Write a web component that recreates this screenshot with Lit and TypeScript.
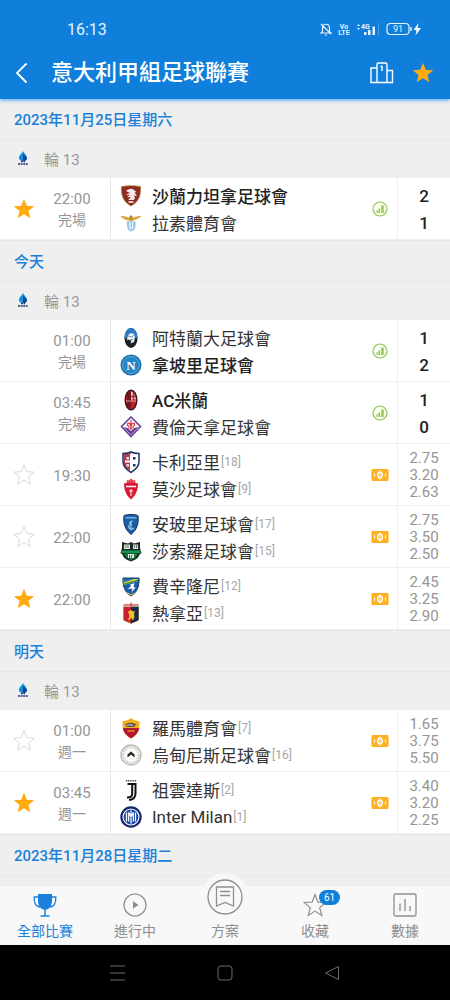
import { LitElement, html, svg, css, nothing } from "lit";
import { customElement, property, state } from "lit/decorators.js";
import { classMap } from "lit/directives/class-map.js";

interface Team { name: string; crest: string; rank?: number; goals?: number }
interface Match {
  id: string; time: string; note?: string; starred?: boolean; star: boolean;
  home: Team; away: Team; odds?: string[];
}
interface Day { label: string; matches: Match[] }

const STAR = "M12 1.8l2.8 6.9 7.4.5-5.7 4.8 1.8 7.3L12 17.3l-6.3 4 1.8-7.3L1.8 9.2l7.4-.5z";

const crests: Record<string, unknown> = {
  salernitana: svg`<path d="M1.5 1.5C7 .5 15 .5 20.500 1.500c.5 8-1 15-9.500 19.500C2.500 16.500 1 9.500 1.500 1.500z" fill="#8d2a22" stroke="#b0893c" stroke-width=".8"/>
    <path d="M6 6c3-2.500 6-3 8-1l2.500 2-2 .5 2.500 3.500-3-.5c1.500 2 1 3.500-.5 4.500H8l3-2.500-4-.5 3-2-4.500-.5L10 8z" fill="#f4e9e6"/><path d="M8.500 17h5" stroke="#fff" stroke-width="1.500"/>`,
  lazio: svg`<path d="M.5 4.500C4 3 8 6.500 11 5.500c3 1 7-2.500 10.500-1C19 6 17 7.500 13 8.500L11 10 8.500 8.500C5 8 3 6.500.5 4.500z" fill="#d9a93f"/>
    <path d="M9.500 4.500L11 3l1.500 1.500v3h-3z" fill="#b78a2b"/><path d="M7 9.500h8.500V14c0 3-2 4.500-4.250 5.500C9 18.500 7 17 7 14z" fill="#8fc3ee"/>
    <path d="M9.300 10.500h3.900v5.500l-2 1.500-1.900-1.500z" fill="#fff"/><path d="M11.200 10.500v6" stroke="#6aaae0"/>`,
  atalanta: svg`<ellipse cx="11" cy="11" rx="6.500" ry="10" fill="#1c1f24"/><path d="M11 1c4 0 6.500 4.500 6.500 10H4.500C4.500 5.500 7 1 11 1z" fill="#2a7cc4"/>
    <path d="M8 9c1-3 3-3.500 6-2l1 3.500-1 4.500-3.500 1.500 1-3-3.500-1-1.500 1z" fill="#eef3f8"/><path d="M8 9l4 1 2-2M10 13l3-1" stroke="#8395a8" fill="none"/>`,
  napoli: svg`<circle cx="11" cy="11" r="10.500" fill="#1b6ea8"/><circle cx="11" cy="11" r="8.500" fill="#2586c6" stroke="#5aa9dc"/>
    <text x="11" y="15.500" class="serif" font-size="13" text-anchor="middle" fill="#fff">N</text>`,
  milan: svg`<ellipse cx="11" cy="11" rx="6.500" ry="10.500" fill="#3a1518"/><ellipse cx="11" cy="11" rx="5.200" ry="9" fill="#c0202b"/>
    <path d="M8 4v14M10 3v16" stroke="#1b0c0e" stroke-width=".9"/><path d="M11 2.500c2.500.5 4.700 4 4.700 8H11z" fill="#e9d9d9"/><path d="M13.500 3.500v15M11 7.500h5" stroke="#c0202b" stroke-width="1.500"/><path d="M6 12h10" stroke="#f0dede" stroke-width=".7"/>`,
  fiorentina: svg`<path d="M11 1l9.500 9.500L11 20.500 1.500 10.500z" fill="#fff" stroke="#69409a" stroke-width="1.600"/><path d="M3.500 11l4 1 3.500 3 3.500-3 4-1L11 19z" fill="#69409a"/>
    <path d="M11 4v10M11 10c-1-4-4-3.500-3.500-1 .5 1.500 2 1 2 1M11 10c1-4 4-3.500 3.500-1-.5 1.500-2 1-2 1M8 12h6" stroke="#e0303c" stroke-width="1.200" fill="none"/>`,
  cagliari: svg`<path d="M3 2.500c3 0 6-.5 8-1.500 2 1 5 1.500 8 1.500v8c0 5-4 8.500-8 11-4-2.500-8-6-8-11z" fill="#fff" stroke="#1c3566" stroke-width="1.500"/>
    <path d="M3.500 3c3 0 5.500-.5 7.500-1.500v19C7 18 3.500 15 3.500 10.500z" fill="#a31b3b" opacity=".85"/><path d="M11 3v17" stroke="#fff" stroke-width="2"/><path d="M5 10.500h12" stroke="#fff" stroke-width="2"/>
    <path d="M6.500 6h2.500v2.500H6.500zM6.500 13h2.500v2.500H6.500z" fill="#f6dce2"/><path d="M13 6h2.500v2.500H13zM13 13h2.500v2.500H13z" fill="#1c3566"/>`,
  monza: svg`<path d="M7 1.500l1.500 1L11 .5l2.500 2 1.500-1 .5 3.500h-9z" fill="#e64a5a"/><path d="M4 5.500c5-1.500 9-1.500 14 0C18 13 15 18 11 21.500 7 18 4 13 4 5.500z" fill="#db1534"/>
    <path d="M6 8.500h10" stroke="#fff" stroke-width="1.500"/><path d="M11 11v7M9 13h4" stroke="#fff" stroke-width="1"/>`,
  empoli: svg`<path d="M4 2.500c4-1.500 10-1.500 14 0 1 8-1 14-7 19C5 16.500 3 10.500 4 2.500z" fill="#1b5fa6" stroke="#12365f"/>
    <path d="M5.500 4h11v1.500h-11z" fill="#7fb0dd"/><path d="M13 8c-4 0-4 3-2 3.500-3 0-3 4 0 4.500 2 .3 3-1 3-1M11 8v9" stroke="#9cc8ee" stroke-width="1.200" fill="none"/>`,
  sassuolo: svg`<path d="M2 2l6 1.500L11 2l3 1.500L20 2v6l1.500 5-2 1.500c-1 4-4 5-8.500 7-4.500-2-7.500-3-8.500-7l-2-1.500L2 8z" fill="#1b2b22"/>
    <path d="M4 4.500h6V9H4zM13 4.500h5V9h-5z" fill="#dfe6e2"/><path d="M6 5v3M8 5v3M14.500 5v3M16.500 5v3" stroke="#46564c" stroke-width=".8"/><path d="M1.500 10.500h19v2.500h-19z" fill="#14984f"/><path d="M4.500 13.500h13c-1 4-3.500 5-6.500 6.500-3-1.500-5.500-2.500-6.500-6.500z" fill="#12803f"/><path d="M8 14h6v4H8z" fill="#dfece4"/><path d="M9.500 15v3M12 15l-1 3" stroke="#12803f"/>`,
  frosinone: svg`<path d="M3 3h16c.5 8-1.500 14-8 18C4.500 17 2.500 11 3 3z" fill="#1c5da8" stroke="#17406f"/><path d="M3.500 4H18v2L3.800 10z" fill="#f0d331"/>
    <path d="M3.500 4H14L3.700 7.500z" fill="#2a6db0"/><path d="M3.800 8.500L18 4.500V6L4.500 10z" fill="#3c9a52"/><path d="M14.500 8l-5 2 2 1-4 3 5-.5-1 4 4-5-2-.5z" fill="#fff"/><path d="M7 17.500l4 2.500 3-2" stroke="#f0d331" fill="none"/>`,
  genoa: svg`<path d="M3.500 4.500h15V18c-3 2-5.500 2-7.500 3.500C9 20 6.500 20 3.500 18z" fill="#c8202f" stroke="#b08d42"/><path d="M11 4.500h7.500V18c-3 2-5.500 2-7.500 3.500z" fill="#182a4a"/>
    <path d="M3.500 1.500h15v3h-15z" fill="#f3e9e2"/><path d="M11 .5v4M3.500 3h15" stroke="#c8202f"/><path d="M8 9.500l3-1.500 2 1.500 2-.5-1 3 .5 3-1.500 3h-1l-.5-2.500-2 2.500H8l1.500-4z" fill="#f2c22f"/>`,
  roma: svg`<path d="M2.500 4.500C6 3.500 9 3 11 1c2 2 5 2.500 8.500 3.500C20 13 17 18 11 21.500 5 18 2 13 2.500 4.500z" fill="#f2b01e"/><path d="M2.700 11h16.600C18.500 15.500 15.500 19 11 21.500 6.500 19 3.500 15.500 2.700 11z" fill="#b3162d"/>
    <path d="M5.500 7.500c2-2 6-2 9-1l2 1.500-2 .5v1.500H7z" fill="#57514a"/><path d="M7 8.500c2-1 4-.8 6 0" stroke="#e8e3da" fill="none"/><path d="M7.500 14h7" stroke="#f2b01e" stroke-width="1.200"/>`,
  udinese: svg`<circle cx="11" cy="11" r="10" fill="#fbfbfa" stroke="#bdbab4" stroke-width="1.400"/><circle cx="11" cy="11" r="7.800" fill="none" stroke="#c9c5bf" stroke-width="1.800" stroke-dasharray="1.500 1"/>
    <path d="M7.500 13.500V10.500L11 7.500l3.500 3v3L11 10.500z" fill="#222"/>`,
  juventus: svg`<path d="M6 1.800h10.500" stroke="#555" stroke-width="1.500" stroke-dasharray="1.200 .6"/><path d="M7.500 5h4.700v10c0 2.500-2 3.500-5.200 3.500" fill="none" stroke="#111" stroke-width="2"/>
    <path d="M12.500 5h3v9.500c0 4-2.500 6-6.500 6.500" fill="none" stroke="#111" stroke-width="2"/>`,
  inter: svg`<circle cx="11" cy="11" r="10.700" fill="#14266b"/><circle cx="11" cy="11" r="8" fill="#1f4fb0" stroke="#fff" stroke-width="1.100"/>
    <path d="M6.500 6.500v9M15.500 6.500v9M11 4.500v13M8.700 15.500v-9L11 11l2.300-4.500v9" stroke="#fff" stroke-width="1.200" fill="none"/>`,
};

const DAYS: Day[] = [
  { label: "2023年11月25日星期六", matches: [
    { id: "m1", time: "22:00", note: "完場", star: true, starred: true,
      home: { name: "沙蘭力坦拿足球會", crest: "salernitana", goals: 2 }, away: { name: "拉素體育會", crest: "lazio", goals: 1 } },
  ] },
  { label: "今天", matches: [
    { id: "m2", time: "01:00", note: "完場", star: false,
      home: { name: "阿特蘭大足球會", crest: "atalanta", goals: 1 }, away: { name: "拿坡里足球會", crest: "napoli", goals: 2 } },
    { id: "m3", time: "03:45", note: "完場", star: false,
      home: { name: "AC米蘭", crest: "milan", goals: 1 }, away: { name: "費倫天拿足球會", crest: "fiorentina", goals: 0 } },
    { id: "m4", time: "19:30", star: true, odds: ["2.75", "3.20", "2.63"],
      home: { name: "卡利亞里", crest: "cagliari", rank: 18 }, away: { name: "莫沙足球會", crest: "monza", rank: 9 } },
    { id: "m5", time: "22:00", star: true, odds: ["2.75", "3.50", "2.50"],
      home: { name: "安玻里足球會", crest: "empoli", rank: 17 }, away: { name: "莎索羅足球會", crest: "sassuolo", rank: 15 } },
    { id: "m6", time: "22:00", star: true, starred: true, odds: ["2.45", "3.25", "2.90"],
      home: { name: "費辛隆尼", crest: "frosinone", rank: 12 }, away: { name: "熱拿亞", crest: "genoa", rank: 13 } },
  ] },
  { label: "明天", matches: [
    { id: "m7", time: "01:00", note: "週一", star: true, odds: ["1.65", "3.75", "5.50"],
      home: { name: "羅馬體育會", crest: "roma", rank: 7 }, away: { name: "烏甸尼斯足球會", crest: "udinese", rank: 16 } },
    { id: "m8", time: "03:45", note: "週一", star: true, starred: true, odds: ["3.40", "3.20", "2.25"],
      home: { name: "祖雲達斯", crest: "juventus", rank: 2 }, away: { name: "Inter Milan", crest: "inter", rank: 1 } },
  ] },
  { label: "2023年11月28日星期二", matches: [] },
];

const reset = css`
  * { box-sizing: border-box; }
  button { font: inherit; color: inherit; background: none; border: 0; padding: 0; margin: 0; cursor: pointer; }
  svg { display: block; flex: none; }
`;

@customElement("match-row")
class MatchRow extends LitElement {
  @property({ attribute: false }) match!: Match;
  @state() private toggled = false;

  static styles = [reset, css`
    :host {
      display: grid; grid-template-columns: 48px 62px minmax(0, 1fr) 34px 53px;
      min-height: 62px; background: #fff; border-bottom: 1px solid #efefef;
    }
    .star, .extra { display: grid; place-items: center; padding-top: 1px; }
    .outline { fill: none; stroke: #d9d9d9; }
    .solid { fill: #ffab0f; stroke: none; }
    .when {
      display: flex; flex-direction: column; justify-content: center; align-items: center;
      padding: 3px 14px 0 0; font-size: 15px; line-height: 21px; color: #959595;
    }
    .note { font-size: 14px; }
    .teams { border-left: 1px solid #e9e9e9; padding: 4px 0 3px 9px; }
    .team { display: flex; align-items: center; height: 27px; }
    .name { margin-left: 10px; font-size: 17px; color: #333; white-space: nowrap; }
    .winner { font-weight: 500; color: #222; }
    .rank { margin-left: 1px; font-size: 12px; color: #a6a6a6; }
    .result { border-left: 1px solid #f1f1f1; text-align: center; display: flex; flex-direction: column; justify-content: center; padding-top: 2px; }
    .goal { font-size: 17px; line-height: 27px; font-weight: 500; color: #222; }
    .odd { font-size: 15px; line-height: 17px; color: #959595; }
    .serif { font-family: "Liberation Serif", serif; font-weight: 700; }
  `];

  private team(t: Team, other: Team) {
    const won = (t.goals ?? 0) > (other.goals ?? 0);
    return html`<div class="team">
      <svg width="22" height="22" viewBox="0 0 22 22" aria-hidden="true">${crests[t.crest]}</svg>
      <span class=${classMap({ name: true, winner: won })}>${t.name}</span>
      ${t.rank ? html`<span class="rank">[${t.rank}]</span>` : nothing}
    </div>`;
  }

  render() {
    const m = this.match;
    const on = !!m.starred !== this.toggled;
    return html`
      ${m.star ? html`<button class="star" aria-label="收藏" aria-pressed=${on} @click=${() => (this.toggled = !this.toggled)}>
        <svg width="24" height="24" viewBox="0 0 24 24"><path class=${on ? "solid" : "outline"} d=${STAR} /></svg>
      </button>` : html`<span></span>`}
      <div class="when"><time>${m.time}</time>${m.note ? html`<span class="note">${m.note}</span>` : nothing}</div>
      <div class="teams">${this.team(m.home, m.away)}${this.team(m.away, m.home)}</div>
      <div class="extra">${m.odds
        ? html`<svg width="18" height="12" viewBox="0 0 18 12" aria-hidden="true">
            <rect x=".5" width="17" height="12" rx="1" fill="#fcb022"/><ellipse cx="9" cy="6" rx="2.300" ry="3" fill="none" stroke="#fff" stroke-width="1.300"/>
            <path d="M9 1.500v9" stroke="#fff" stroke-width=".9"/><path d="M3.500 4v4M14.500 4v4" stroke="#fff" stroke-width=".9"/></svg>`
        : html`<svg width="16" height="16" viewBox="0 0 16 16" aria-hidden="true">
            <circle cx="8" cy="8" r="7" fill="#fbfff4" stroke="#8fc748" stroke-width="1.200"/>
            <path d="M5.200 9v3" stroke="#8fc748" stroke-width="1.200"/><path d="M7.300 7.500V12" stroke="#8fc748" stroke-width="1.600"/><path d="M10.500 4.500V12" stroke="#8fc748" stroke-width="2.400"/></svg>`}</div>
      <div class="result">${m.odds
        ? m.odds.map((o) => html`<span class="odd">${o}</span>`)
        : [m.home, m.away].map((t) => html`<span class="goal">${t.goals}</span>`)}</div>
    `;
  }
}

@customElement("app-root")
class AppRoot extends LitElement {
  @state() private tab = 0;

  static styles = [reset, css`
    :host {
      display: flex; flex-direction: column; height: 100vh; overflow: hidden; background: #efefef;
      font-family: Roboto, "Noto Sans CJK TC", sans-serif;
    }
    header { flex: none; background: #107fdc; color: #fff; z-index: 1; box-shadow: 0 1px 4px #3d9cf0; }
    .status { display: flex; align-items: center; padding: 16px 28px 5px 67px; height: 47px; font-size: 16px; color: #e4f3ff; }
    .signals { display: flex; align-items: center; gap: 6px; margin-left: auto; }
    .tiny { font-size: 7px; font-weight: 700; fill: #e4f3ff; }
    .pct { font-size: 9px; fill: #e4f3ff; }
    .bar { display: flex; align-items: center; height: 52px; padding: 0 15px 0 14px; }
    h1 { flex: 1; margin: 0 0 0 21px; font-size: 22px; font-weight: 500; line-height: 32px; white-space: nowrap; }
    .table { margin-right: 16px; }
    main { flex: 1; min-height: 0; overflow: hidden; }
    h2 {
      margin: 0; height: 41px; padding: 0 14px; border-bottom: 1px solid #e6e6e6;
      font-size: 15px; font-weight: 500; line-height: 42px; color: #1a80d9;
    }
    .round { display: flex; align-items: center; height: 38px; padding: 0 0 2px 16px; gap: 14px; font-size: 15px; color: #999; }
    .list { border-bottom: 1px solid #e8e8e8; }
    nav { flex: none; display: grid; grid-template-columns: repeat(5, 1fr); height: 59px; background: #f8f8f8; z-index: 1; }
    .tab { display: flex; flex-direction: column; align-items: center; padding-top: 7px; font-size: 14px; line-height: 24px; color: #8e8e8e; }
    .active { color: #1a80d9; }
    .icon { position: relative; margin-bottom: 2px; }
    .bubble { margin: -20px 0 -2px; padding: 6px; border-radius: 50%; background: #f8f8f8; }
    .badge {
      position: absolute; left: 16px; top: -3px; height: 15px; padding: 0 5px; border-radius: 8px;
      background: #107fdc; color: #fff; font-size: 10px; line-height: 15px;
    }
    .system { flex: none; display: flex; justify-content: center; align-items: center; gap: 91px; height: 55px; padding-right: 2px; background: #000; }
  `];

  private tabs = [
    { label: "全部比賽", icon: svg`<path d="M5 1h14v7c0 5-3 8-5.500 8.500h-3C8 16 5 13 5 8z" fill="currentColor"/>
        <path d="M5 4H1.200c-.3 6 1.300 9.500 5.800 10M19 4h3.800c.3 6-1.300 9.500-5.800 10" fill="none" stroke="currentColor" stroke-width="1.300"/><path d="M12 16v7M7.500 23h9" fill="none" stroke="currentColor" stroke-width="1.500"/>` },
    { label: "進行中", icon: svg`<circle cx="12" cy="12" r="11" fill="none" stroke="currentColor" stroke-width="1.200"/><path d="M10 8.300l5.500 3.700-5.500 3.700z" fill="currentColor"/>` },
    { label: "方案", icon: nothing },
    { label: "收藏", badge: "61", icon: svg`<path d="M12 1.500l2.900 7.600 8 .4-6.200 5.100 2.100 7.900L12 18.100l-6.800 4.400 2.100-7.900L1.100 9.500l8-.4z" fill="none" stroke="currentColor" stroke-width="1.200"/>` },
    { label: "數據", icon: svg`<rect x="1" y="1" width="22" height="22" rx="1.500" fill="none" stroke="currentColor" stroke-width="1.300"/><path d="M7 10.500V18M12 6v12M17 13v5" stroke="currentColor" stroke-width="1.300"/>` },
  ];

  render() {
    return html`
      <header>
        <div class="status">
          <span>16:13</span>
          <div class="signals" aria-hidden="true">
            <svg width="12" height="14" viewBox="0 0 12 14" fill="none" stroke="#e4f3ff" stroke-width="1.200"><path d="M2.500 10V6c0-5 7-5 7 0v4l1.500 1H1zM5 13h2M1 2l10 10"/></svg>
            <svg width="12" height="14" viewBox="0 0 12 14"><text class="tiny" x="6" y="6.500" text-anchor="middle">Vo</text><text class="tiny" x="6" y="13" text-anchor="middle">LTE</text></svg>
            <svg width="24" height="14" viewBox="0 0 24 14" fill="#e4f3ff"><path d="M1 4l1.500-2L4 4zM1 6l1.500 2L4 6zM8 10h2.500v3H8zM12 8h2.500v5H12zM16.500 4.500H19V13h-2.500z"/><path d="M22.500 1v12" stroke="#4aa0e8"/><text class="tiny" x="5" y="6.500">4G</text></svg>
            <svg width="36" height="14" viewBox="0 0 36 14"><rect x="1" y="1.500" width="22" height="11" rx="3.500" fill="none" stroke="#e4f3ff" stroke-width="1.200"/><path d="M25 5v4" stroke="#e4f3ff" stroke-width="1.500"/><text class="pct" x="12" y="10.200" text-anchor="middle">91</text><path d="M32.500 1l-5 7h3l-1 5.500 5.500-7.500h-3.500z" fill="#fff"/></svg>
          </div>
        </div>
        <div class="bar">
          <button aria-label="返回"><svg width="16" height="22" viewBox="0 0 16 22"><path d="M12.500 1.500L3 11l9.500 9.500" fill="none" stroke="#fff" stroke-width="1.800"/></svg></button>
          <h1>意大利甲組足球聯賽</h1>
          <button class="table" aria-label="積分榜"><svg width="26" height="24" viewBox="0 0 26 24" fill="none" stroke="#fff" stroke-width="1.400"><path d="M8 7H2v14.500h21.500V9.500H18M8 21.500V3.500C8 2.500 8.500 2 9.500 2h7c1 0 1.500.5 1.500 1.500v18M11.500 5.500H13V10"/></svg></button>
          <button aria-label="收藏"><svg width="24" height="24" viewBox="0 0 24 24"><path d=${STAR} fill="#ffab0f"/></svg></button>
        </div>
      </header>
      <main>
        ${DAYS.map((d) => html`<section>
          <h2>${d.label}</h2>
          ${d.matches.length ? html`
            <div class="round">
              <svg width="14" height="16" viewBox="0 0 14 16" aria-hidden="true"><path d="M7 1c1 2.500 4 4 4 7 0 2-1.500 3-4 3S3 10 3 8c0-3 3-4.500 4-7z" fill="#1190dc"/><path d="M7 4c2 2 4 3 4 4.500C10.500 10.500 9 11 7 11z" fill="#17409a"/><path d="M5 11.500h4M2 14h10" stroke="#22336f" stroke-width="1.600" stroke-dasharray="2 .6"/></svg>
              <span>輪 13</span>
            </div>
            <div class="list">${d.matches.map((m) => html`<match-row .match=${m}></match-row>`)}</div>` : nothing}
        </section>`)}
      </main>
      <nav>
        ${this.tabs.map((t, i) => html`<button class=${classMap({ tab: true, active: this.tab === i })} @click=${() => (this.tab = i)}>
          ${t.icon === nothing
            ? html`<span class="bubble"><svg width="36" height="36" viewBox="0 0 36 36" fill="none" stroke="currentColor" stroke-width="1.300"><circle cx="18" cy="18" r="17"/><path d="M9.500 8h17v19L18 23.500 9.500 27zM13 12.500h10M13 16.500h10"/></svg></span>`
            : html`<span class="icon"><svg width="24" height="24" viewBox="0 0 24 24">${t.icon}</svg>${t.badge ? html`<span class="badge">${t.badge}</span>` : nothing}</span>`}
          <span>${t.label}</span>
        </button>`)}
      </nav>
      <div class="system">
        <svg width="17" height="16" viewBox="0 0 17 16" stroke="#6a6a6a"><path d="M1 1h15M1 8h15M1 15h15"/></svg>
        <svg width="16" height="16" viewBox="0 0 16 16" fill="none" stroke="#6a6a6a"><rect x="1" y="1" width="14" height="14" rx="3"/></svg>
        <svg width="16" height="16" viewBox="0 0 16 16" fill="none" stroke="#6a6a6a"><path d="M14.500 1.500v13L1.500 8z" stroke-linejoin="round"/></svg>
      </div>
    `;
  }
}
